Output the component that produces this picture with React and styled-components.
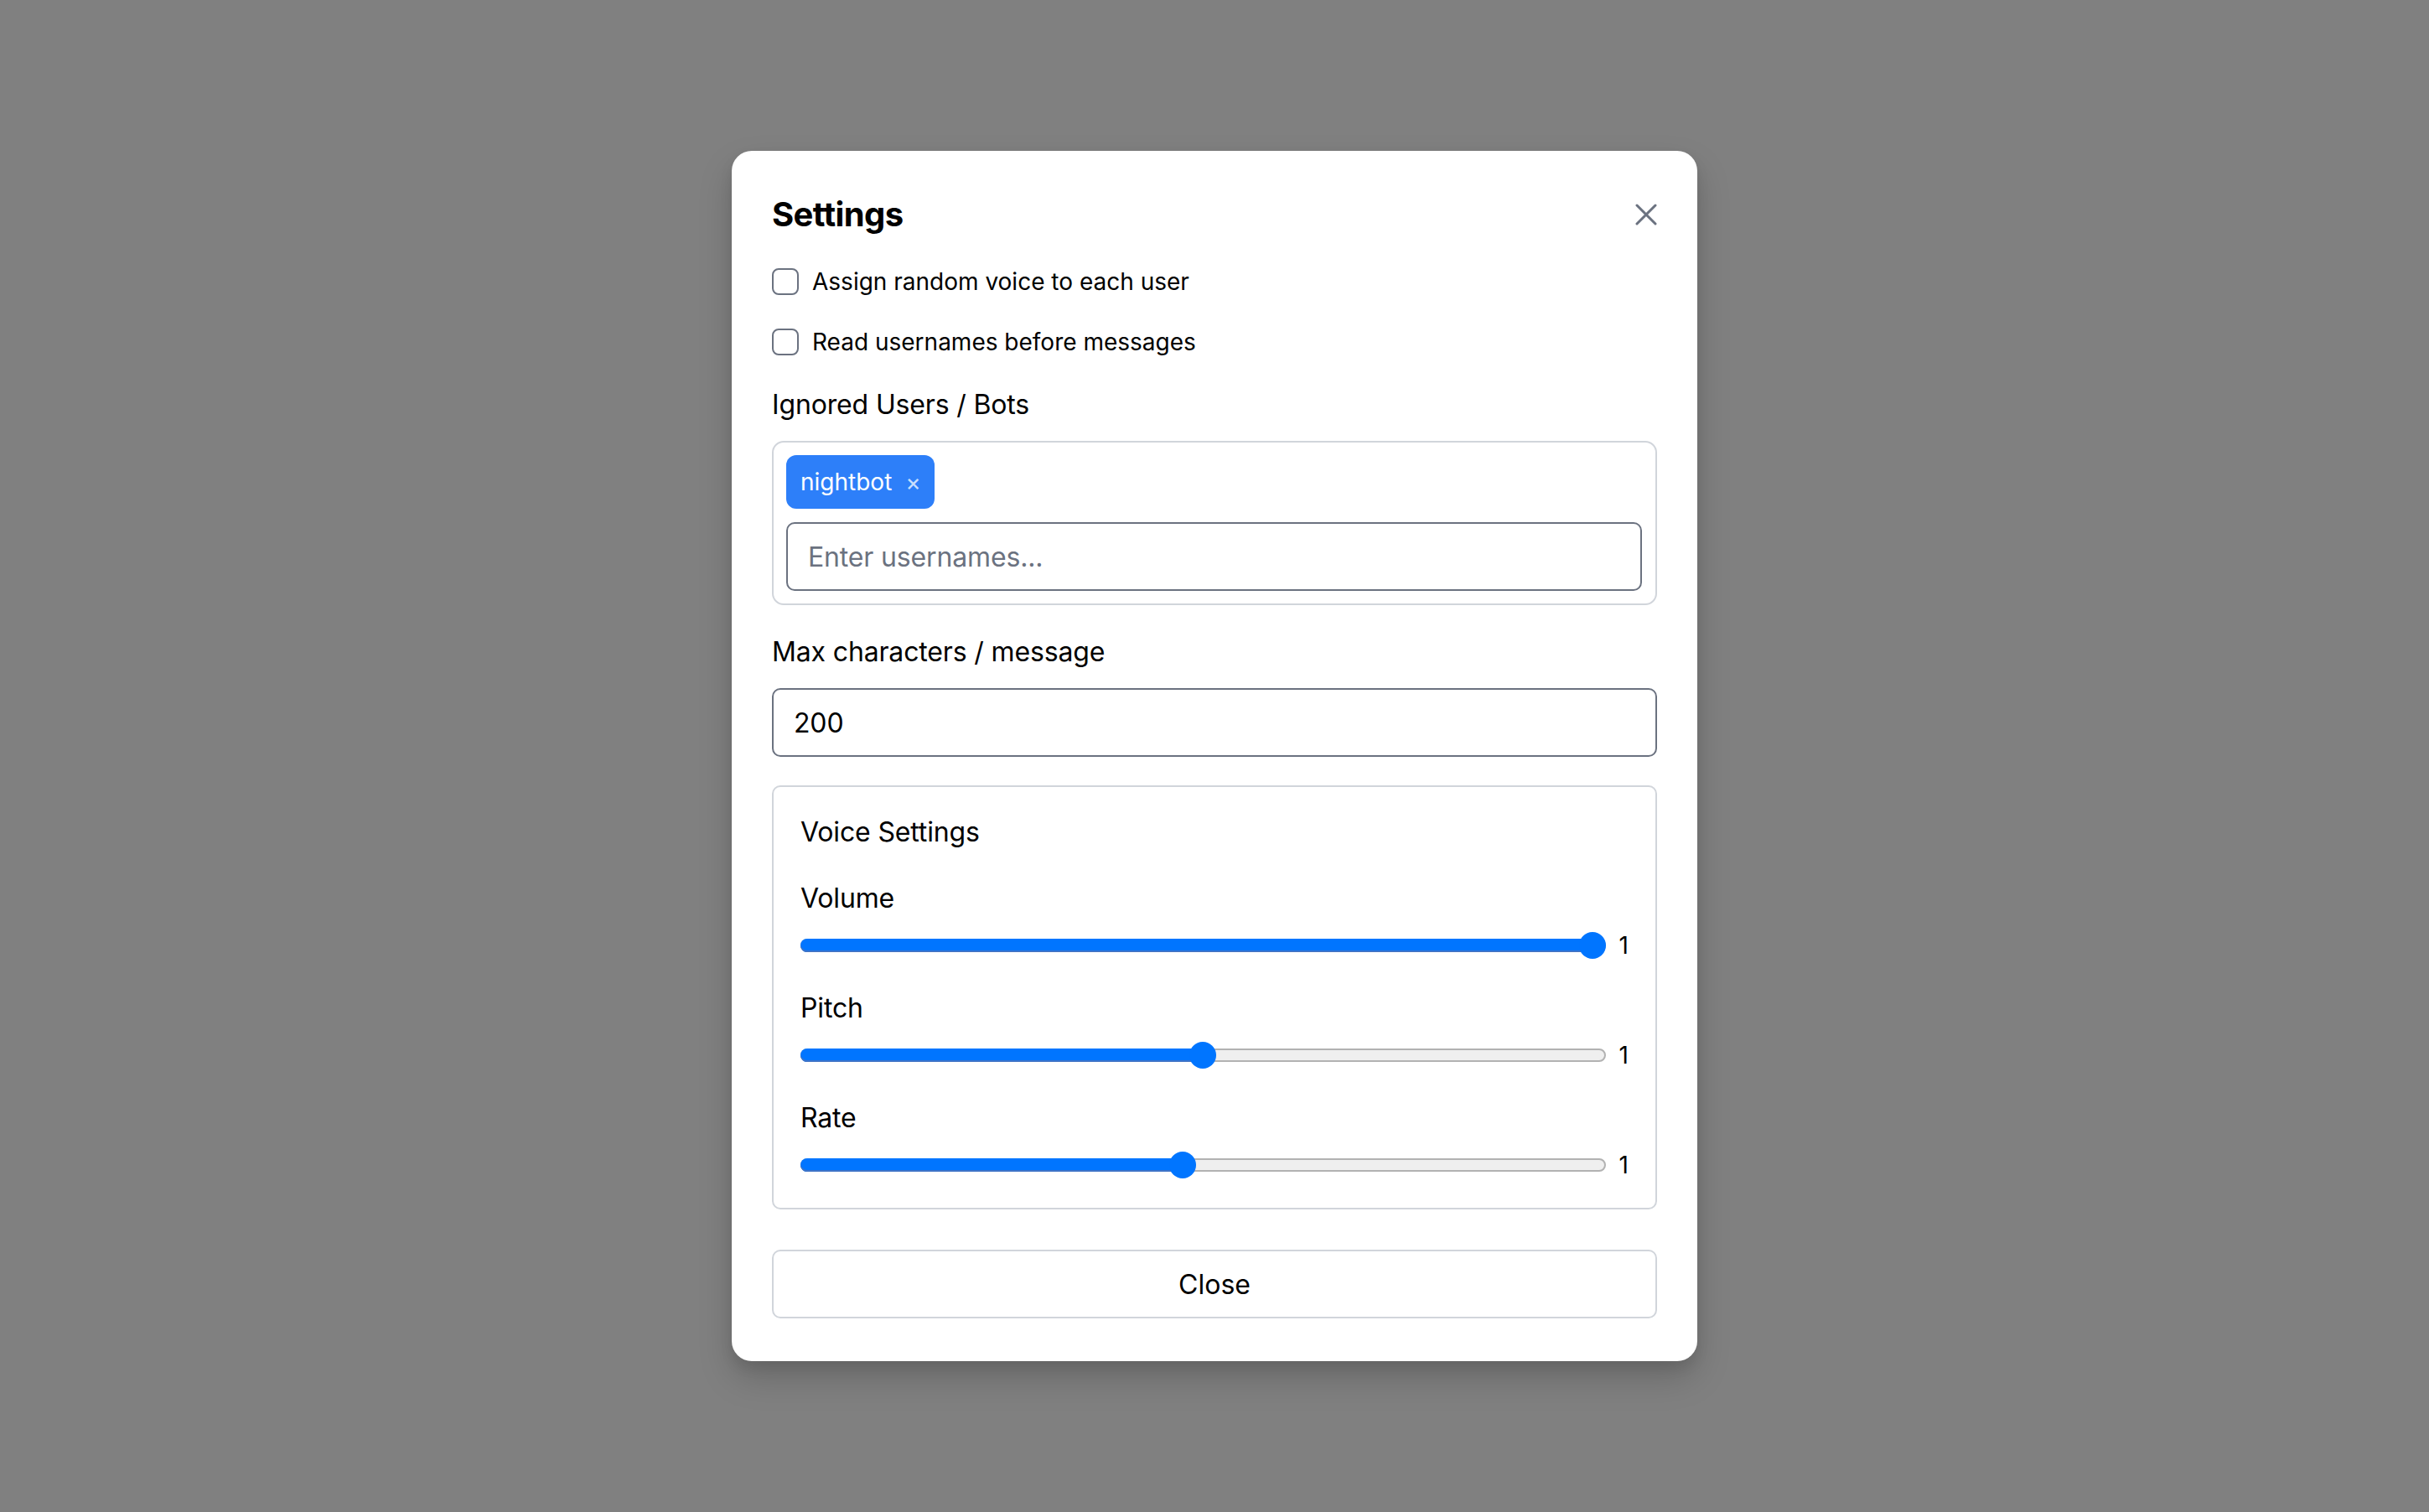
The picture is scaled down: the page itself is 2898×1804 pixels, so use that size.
import React, { useState } from "react";
import styled, { createGlobalStyle } from "styled-components";

const GlobalStyle = createGlobalStyle`
  html, body {
    margin: 0;
    padding: 0;
    background: #808080;
    font-family: Inter, "Noto Sans", "Liberation Sans", sans-serif;
    color: #000;
  }
  * { box-sizing: border-box; }
`;

const Backdrop = styled.div`
  min-height: 100vh;
  display: flex;
  align-items: center;
  justify-content: center;
`;

const Dialog = styled.div`
  width: 1152px;
  background: #fff;
  border-radius: 24px;
  padding: 48px 48px 51px;
  display: flex;
  flex-direction: column;
  box-shadow: 0 20px 40px rgba(0, 0, 0, 0.18), 0 8px 16px rgba(0, 0, 0, 0.08);
`;

const Header = styled.div`
  display: flex;
  align-items: center;
  justify-content: space-between;
  height: 56px;
  margin-bottom: 32px;
`;

const Title = styled.h2`
  margin: 0;
  font-size: 40px;
  line-height: 56px;
  font-weight: 700;
  letter-spacing: -0.6px;
`;

const IconButton = styled.button`
  width: 26px;
  height: 26px;
  padding: 0;
  border: none;
  background: transparent;
  color: #6b7280;
  display: flex;
  align-items: center;
  justify-content: center;
  cursor: pointer;
`;

const CheckRow = styled.label`
  display: flex;
  align-items: center;
  gap: 16px;
  height: 40px;
  font-size: 28px;
  line-height: 40px;
  margin-bottom: ${(p) => p.$gap}px;
  cursor: pointer;
`;

const Box = styled.input.attrs({ type: "checkbox" })`
  appearance: none;
  -webkit-appearance: none;
  margin: 0;
  width: 32px;
  height: 32px;
  border: 2px solid #6b7280;
  border-radius: 8px;
  background: #fff;
  flex: none;
`;

const FieldLabel = styled.div`
  font-size: 32px;
  line-height: 48px;
  letter-spacing: -0.15px;
  margin-bottom: ${(p) => p.$gap || 19}px;
`;

const TagBox = styled.div`
  border: 2px solid #d1d5db;
  border-radius: 14px;
  padding: 15px 16px 15px 15px;
  display: flex;
  flex-direction: column;
  gap: 16px;
  margin-bottom: 32px;
`;

const TagList = styled.div`
  display: flex;
  flex-wrap: wrap;
  gap: 12px;
`;

const Tag = styled.span`
  display: inline-flex;
  align-items: center;
  height: 64px;
  padding: 0 16px 0 17px;
  background: #2d7ff9;
  color: #fff;
  border-radius: 12px;
  font-size: 28px;
  line-height: 1;
`;

const TagRemove = styled.button`
  margin-left: 16px;
  padding: 0;
  border: none;
  background: transparent;
  color: rgba(255, 255, 255, 0.75);
  font-family: inherit;
  font-size: 28px;
  line-height: 1;
  cursor: pointer;
`;

const TextInput = styled.input`
  width: 100%;
  height: 82px;
  border: 2px solid #6b7280;
  border-radius: 10px;
  padding: 0 24px;
  font-family: inherit;
  font-size: 32px;
  letter-spacing: -0.15px;
  color: #000;
  background: #fff;
  outline: none;
  margin-bottom: ${(p) => p.$gap || 0}px;

  &::placeholder {
    color: #6b7280;
  }
`;

const Panel = styled.div`
  border: 2px solid #d1d5db;
  border-radius: 10px;
  padding: 32px 32px 33px;
  display: flex;
  flex-direction: column;
  gap: 33px;
  margin-bottom: 48px;
`;

const PanelTitle = styled.div`
  font-size: 32px;
  line-height: 44px;
  letter-spacing: -0.15px;
`;

const SliderGroup = styled.div`
  display: flex;
  flex-direction: column;
`;

const SliderLabel = styled.div`
  font-size: 32px;
  line-height: 48px;
  letter-spacing: -0.15px;
  margin-bottom: 14px;
`;

const SliderRow = styled.div`
  display: flex;
  align-items: center;
  gap: 16px;
  height: 36px;
`;

const Track = styled.div`
  position: relative;
  flex: 1;
  height: 16px;
  border-radius: 8px;
  background: #efefef;
  border: 2px solid #b2b2b2;
`;

const Fill = styled.div`
  position: absolute;
  left: -2px;
  top: -2px;
  bottom: -2px;
  border-radius: 8px;
  background: #0075ff;
  box-shadow: inset 0 -2px 0 #3f73c6;
`;

const Thumb = styled.div`
  position: absolute;
  top: 50%;
  width: 32px;
  height: 32px;
  margin-top: -16px;
  margin-left: -2px;
  border-radius: 50%;
  background: #0075ff;
`;

const SliderValue = styled.span`
  font-size: 28px;
  line-height: 36px;
  min-width: 10px;
  text-align: right;
`;

const CloseButton = styled.button`
  height: 82px;
  width: 100%;
  border: 2px solid #d1d5db;
  border-radius: 10px;
  background: #fff;
  font-family: inherit;
  font-size: 32px;
  color: #000;
  cursor: pointer;
`;

function XIcon() {
  return (
    <svg width="26" height="26" viewBox="0 0 26 26" fill="none">
      <path
        d="M2 2L24 24M24 2L2 24"
        stroke="currentColor"
        strokeWidth="3"
        strokeLinecap="round"
      />
    </svg>
  );
}

function Slider({ label, value, min, max }) {
  const frac = (value - min) / (max - min);
  const center = `calc(${frac} * (100% - 28px) + 14px)`;
  return (
    <SliderGroup>
      <SliderLabel>{label}</SliderLabel>
      <SliderRow>
        <Track role="slider" aria-valuemin={min} aria-valuemax={max} aria-valuenow={value}>
          <Fill style={{ width: `calc(${center} + 2px)` }} />
          <Thumb style={{ left: `calc(${center} - 16px + 2px)` }} />
        </Track>
        <SliderValue>{value}</SliderValue>
      </SliderRow>
    </SliderGroup>
  );
}

export default function App() {
  const [tags, setTags] = useState(["nightbot"]);
  const [maxChars, setMaxChars] = useState("200");

  return (
    <>
      <GlobalStyle />
      <Backdrop>
        <Dialog role="dialog" aria-label="Settings">
          <Header>
            <Title>Settings</Title>
            <IconButton aria-label="Close">
              <XIcon />
            </IconButton>
          </Header>

          <CheckRow $gap={32}>
            <Box />
            Assign random voice to each user
          </CheckRow>
          <CheckRow $gap={31}>
            <Box />
            Read usernames before messages
          </CheckRow>

          <FieldLabel $gap={19}>Ignored Users / Bots</FieldLabel>
          <TagBox>
            <TagList>
              {tags.map((t) => (
                <Tag key={t}>
                  {t}
                  <TagRemove onClick={() => setTags(tags.filter((x) => x !== t))}>×</TagRemove>
                </Tag>
              ))}
            </TagList>
            <TextInput placeholder="Enter usernames..." />
          </TagBox>

          <FieldLabel $gap={19}>Max characters / message</FieldLabel>
          <TextInput
            $gap={34}
            value={maxChars}
            onChange={(e) => setMaxChars(e.target.value)}
          />

          <Panel>
            <PanelTitle>Voice Settings</PanelTitle>
            <Slider label="Volume" value={1} min={0} max={1} />
            <Slider label="Pitch" value={1} min={0} max={2} />
            <Slider label="Rate" value={1} min={0.1} max={2} />
          </Panel>

          <CloseButton>Close</CloseButton>
        </Dialog>
      </Backdrop>
    </>
  );
}
